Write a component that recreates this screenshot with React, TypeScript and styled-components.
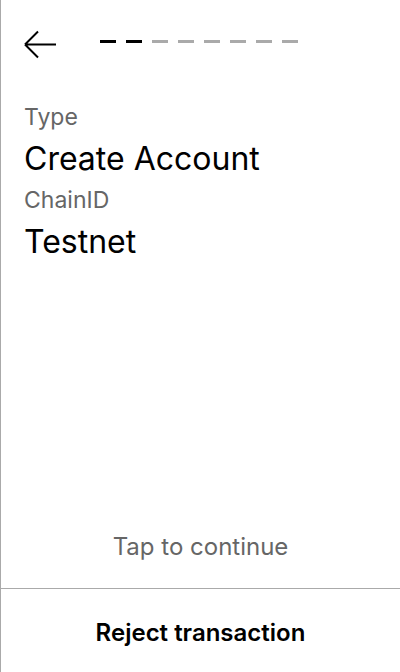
import React from "react"
import styled, { createGlobalStyle } from "styled-components"

const GlobalStyle = createGlobalStyle`
  html, body {
    margin: 0;
    padding: 0;
    background: #fff;
  }
  * {
    box-sizing: border-box;
  }
`

const STEPS = 8
const CURRENT = 2

const rows = [
  { label: "Type", value: "Create Account" },
  { label: "ChainID", value: "Testnet" },
]

const App = () => {
  return (
    <>
      <GlobalStyle />
      <Screen>
        <Header>
          <BackButton aria-label="Back">
            <svg width="34" height="30" viewBox="0 0 34 30" fill="none">
              <path
                d="M2 15.5L15 2.5M2 15.5L15 28.5M2 15.5H33"
                stroke="#000"
                strokeWidth="2"
              />
            </svg>
          </BackButton>
          <Progress>
            {Array.from({ length: STEPS }).map((_, i) => (
              <Dash key={i} $done={i < CURRENT} />
            ))}
          </Progress>
        </Header>
        <Details>
          {rows.map(row => (
            <Field key={row.label}>
              <Label>{row.label}</Label>
              <Value>{row.value}</Value>
            </Field>
          ))}
        </Details>
        <Hint>Tap to continue</Hint>
        <Footer>
          <RejectButton>Reject transaction</RejectButton>
        </Footer>
      </Screen>
    </>
  )
}

const Screen = styled.div`
  display: flex;
  flex-direction: column;
  height: 672px;
  width: 400px;
  border-left: 1px solid #aaaaaa;
  font-family: Inter, "Noto Sans", sans-serif;
  color: #000;
`

const Header = styled.div`
  display: flex;
  align-items: center;
  height: 84px;
  padding: 3px 0 0 22px;
`

const BackButton = styled.button`
  display: flex;
  border: none;
  background: none;
  padding: 0;
  cursor: pointer;
`

const Progress = styled.div`
  display: flex;
  gap: 10px;
  margin-left: 43px;
  margin-top: -4px;
`

const Dash = styled.span<{ $done: boolean }>`
  width: 16px;
  height: 3px;
  background: ${p => (p.$done ? "#000" : "#aaaaaa")};
`

const Details = styled.div`
  display: flex;
  flex-direction: column;
  gap: 8px;
  padding: 19px 23px 0;
  flex: 1;
`

const Field = styled.div`
  display: flex;
  flex-direction: column;
  gap: 8px;
`

const Label = styled.div`
  font-size: 23px;
  line-height: 28px;
  color: #666666;
`

const Value = styled.div`
  font-size: 32px;
  line-height: 39px;
  color: #000;
`

const Hint = styled.div`
  text-align: center;
  font-size: 24px;
  line-height: 29px;
  color: #666666;
  padding-bottom: 27px;
`

const Footer = styled.div`
  display: flex;
  justify-content: center;
  align-items: center;
  height: 84px;
  border-top: 1px solid #aaaaaa;
`

const RejectButton = styled.button`
  border: none;
  background: none;
  padding: 4px 0 0;
  font-family: Inter, "Noto Sans", sans-serif;
  font-size: 24px;
  line-height: 29px;
  font-weight: 600;
  color: #000;
  cursor: pointer;
`

export default App
